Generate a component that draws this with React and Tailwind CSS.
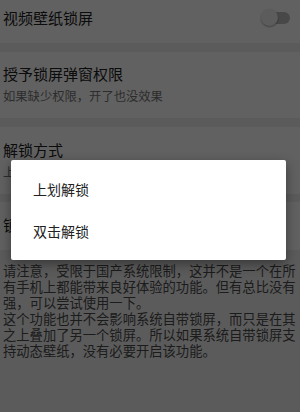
export default function App() {
  const font = { fontFamily: '"Noto Sans CJK SC", "Noto Sans", sans-serif' };
  return (
    <div className="relative w-[300px] h-[412px] overflow-hidden bg-[#f0f0f0]" style={font}>
      {/* settings list */}
      <div className="bg-white h-[43px] flex items-start justify-between pl-[3px] pr-[10px] pt-[8px]">
        <span className="text-[15px] leading-[20px] text-[#212121]">视频壁纸锁屏</span>
        <div className="relative w-[29px] h-[20px] mt-[0px]">
          <div className="absolute right-0 top-[4px] w-[22px] h-[12px] rounded-full bg-[#bdbdbd]" />
          <div className="absolute left-0 top-[1px] w-[17px] h-[17px] rounded-full bg-[#f1f1f1] shadow-[0_1px_2px_rgba(0,0,0,0.35)]" />
        </div>
      </div>
      <div className="h-[9px]" />
      <div className="bg-white h-[66px] pl-[3px] pt-[12px]">
        <div className="text-[15px] leading-[20px] text-[#212121]">授予锁屏弹窗权限</div>
        <div className="mt-[4px] text-[12.3px] leading-[16px] text-[#757575]">如果缺少权限，开了也没效果</div>
      </div>
      <div className="h-[9px]" />
      <div className="bg-white h-[67px] pl-[3px] pt-[13px]">
        <div className="text-[15px] leading-[20px] text-[#212121]">解锁方式</div>
        <div className="mt-[4px] text-[12.3px] leading-[16px] text-[#757575]">上划解锁</div>
      </div>
      <div className="h-[8px]" />
      <div className="bg-white h-[48px] pl-[3px] pt-[13px]">
        <div className="text-[15px] leading-[20px] text-[#212121]">锁屏时间样式</div>
      </div>
      <div className="w-[294px] ml-[3px] pt-[13px] text-[13.3px] leading-[16px] text-[#4a4a4a]">
        <p>请注意，受限于国产系统限制，这并不是一个在所有手机上都能带来良好体验的功能。但有总比没有强，可以尝试使用一下。</p>
        <p>这个功能也并不会影响系统自带锁屏，而只是在其之上叠加了另一个锁屏。所以如果系统自带锁屏支持动态壁纸，没有必要开启该功能。</p>
      </div>

      {/* scrim */}
      <div className="absolute inset-0 bg-black/[0.62]" />

      {/* dialog */}
      <div className="absolute left-[11px] top-[160px] w-[275px] bg-white rounded-[2px] shadow-[0_4px_12px_rgba(0,0,0,0.4)] py-[8px]">
        <div className="h-[42px] flex items-center pl-[22px] text-[14px] text-[#212121]">上划解锁</div>
        <div className="h-[42px] flex items-center pl-[22px] text-[14px] text-[#212121]">双击解锁</div>
      </div>
    </div>
  );
}
